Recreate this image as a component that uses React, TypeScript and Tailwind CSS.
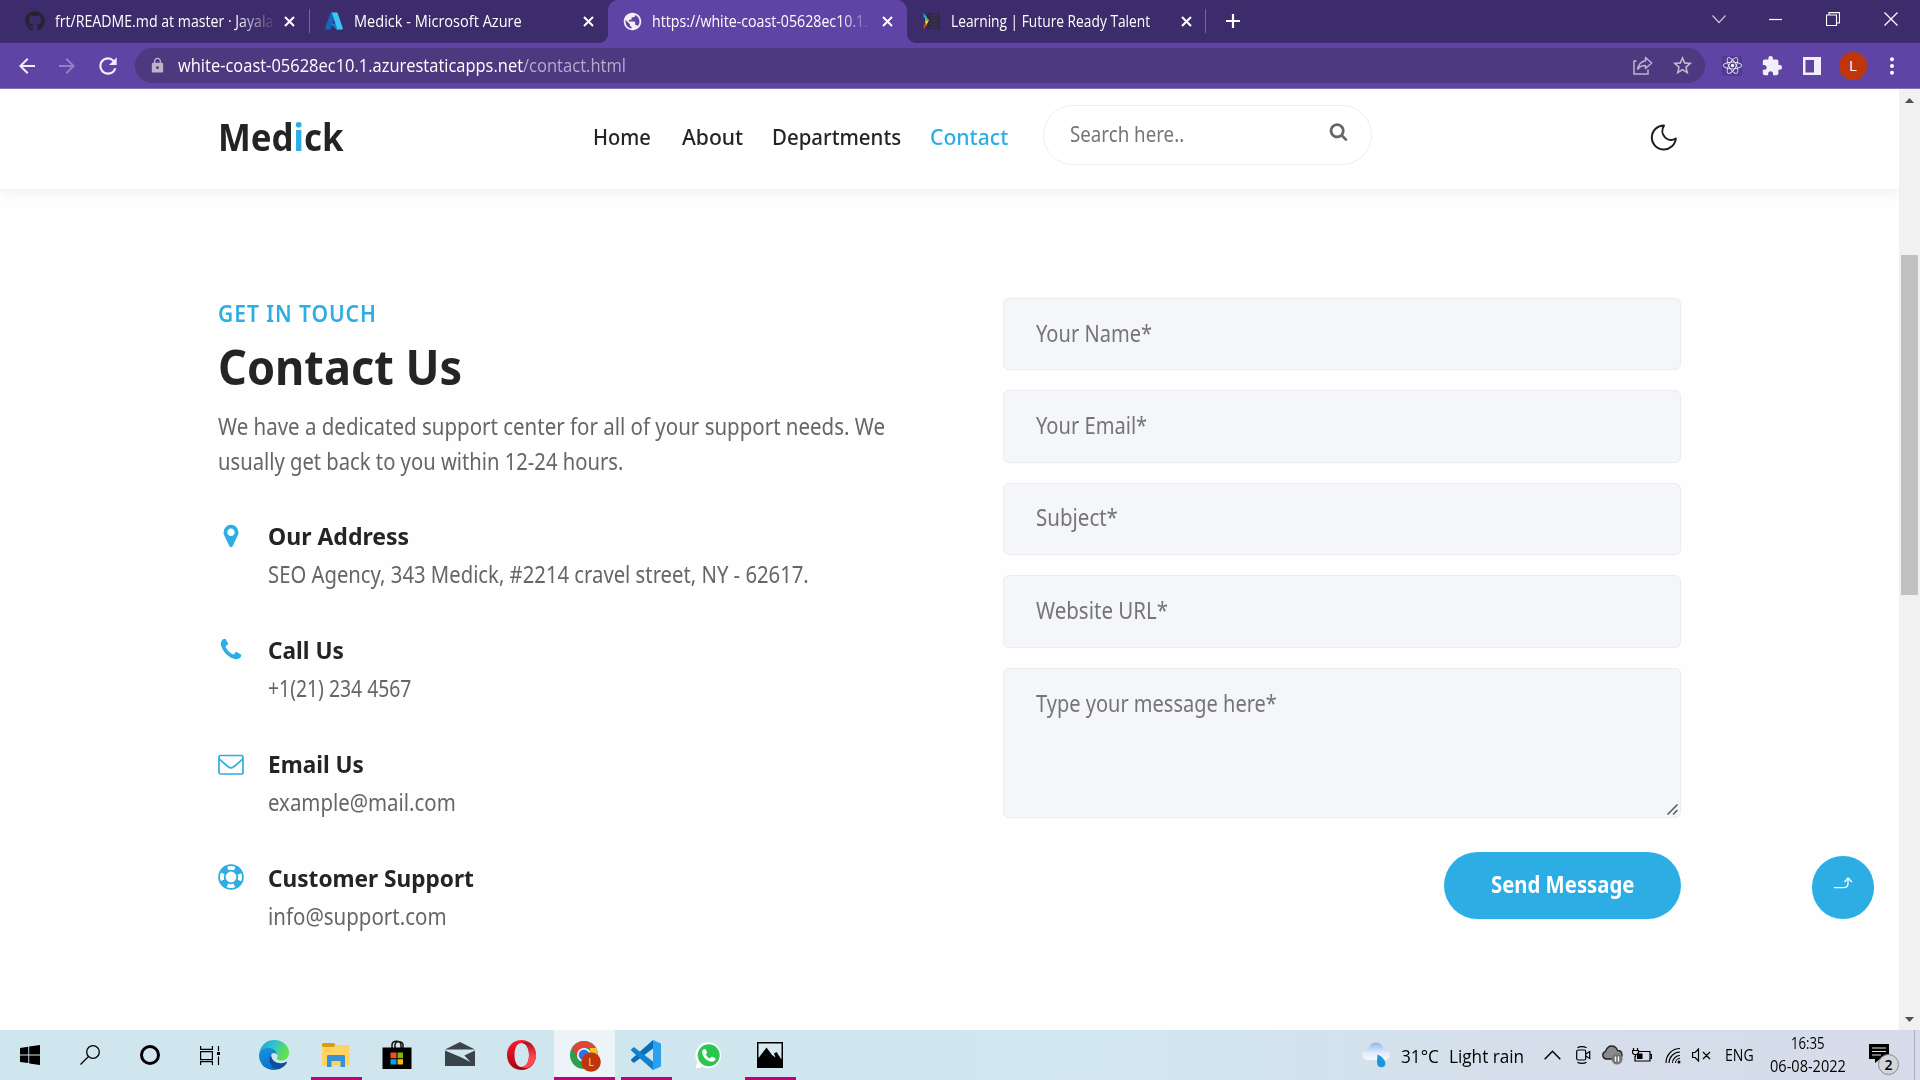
import React, { useLayoutEffect, useRef, useState } from 'react';
import { FaGithub, FaReact } from 'react-icons/fa';
import { MdExtension, MdStarBorder, MdRefresh, MdArrowBack, MdArrowForward, MdLock, MdPublic } from 'react-icons/md';

/** Single line of text condensed or widened horizontally to an exact width. */
function Fit({ w, className = '', children }: { w: number; className?: string; children: React.ReactNode }) {
  const ref = useRef<HTMLSpanElement>(null);
  const [scale, setScale] = useState(1);
  useLayoutEffect(() => {
    if (ref.current) setScale(w / ref.current.offsetWidth);
  }, [w]);
  return (
    <span className={`block shrink-0 whitespace-nowrap ${className}`} style={{ width: w }}>
      <span ref={ref} className="inline-block origin-left align-top" style={{ transform: `scaleX(${scale})` }}>
        {children}
      </span>
    </span>
  );
}

function CloseX() {
  return (
    <svg className="size-[11px] shrink-0" viewBox="0 0 11 11" stroke="#fff" strokeWidth="2" fill="none">
      <path d="M1 1l9 9M10 1l-9 9" />
    </svg>
  );
}

function AzureLogo() {
  return (
    <svg className="h-[18px] w-[18px] shrink-0" viewBox="0 0 18 18">
      <path d="M6.2.6h5.2L5.8 16.9c-.1.4-.5.6-.9.6H1c-.7 0-1.100-.6-.9-1.200L5.300 1.200c.1-.4.5-.6.9-.6z" fill="#1568b4" />
      <path d="M13.700 11.600H5.600l5.300 5.500c.3.300.6.400 1 .4h4z" fill="#0b7fd6" />
      <path d="M12.700 1.200c-.1-.4-.5-.6-.9-.6H6.100c.4 0 .8.200.9.600l5 15.100c.2.600-.2 1.200-.9 1.200h5.800c.7 0 1.100-.6.900-1.200z" fill="#3cc4f5" />
    </svg>
  );
}

function TabStrip() {
  return (
    <div className="flex h-[43px] items-center bg-[#3d2c6b] pb-[1px] text-[15.5px] leading-5 text-white">
      <div className="flex h-full w-[310px] shrink-0 items-center pl-[25px]">
        <FaGithub className="size-5 shrink-0 text-[#24242c]" />
        <div className="-mt-px ml-[10px] w-[221px] overflow-hidden [mask-image:linear-gradient(to_right,black_82%,transparent)]">
          <Fit w={218}>frt/README.md at master · Jayala</Fit>
        </div>
        <span className="ml-[8px]"><CloseX /></span>
        <span className="ml-auto h-6 w-px bg-[#7567a0]" />
      </div>
      <div className="flex h-full w-[298px] shrink-0 items-center pl-[15px]">
        <AzureLogo />
        <Fit w={168} className="-mt-px ml-[11px]">Medick - Microsoft Azure</Fit>
        <span className="ml-auto mr-[14px]"><CloseX /></span>
      </div>
      <div className="relative flex h-[43px] w-[299px] shrink-0 items-center self-start rounded-t-[10px] bg-[#5f44a5] pb-[1px] pl-[14px]">
        <span className="absolute -left-[10px] bottom-0 size-[10px] bg-[radial-gradient(circle_at_top_left,transparent_10px,#5f44a5_10.5px)]" />
        <span className="absolute -right-[10px] bottom-0 size-[10px] bg-[radial-gradient(circle_at_top_right,transparent_10px,#5f44a5_10.5px)]" />
        <MdPublic className="size-[21px] shrink-0 text-[#f1f0f6]" />
        <div className="-mt-px ml-[9px] w-[219px] overflow-hidden [mask-image:linear-gradient(to_right,black_86%,transparent)]">
          <Fit w={216}>https://white-coast-05628ec10.1.</Fit>
        </div>
        <span className="ml-auto mr-[14px]"><CloseX /></span>
      </div>
      <div className="flex h-full w-[299px] shrink-0 items-center pl-[16px]">
        <svg className="size-[18px] shrink-0" viewBox="0 0 18 18">
          <rect x="4" y="1" width="13" height="16" fill="#2e2845" />
          <path d="M7 3h8M7 6h8M7 9h8M7 12h8M7 15h8" stroke="#3d3654" />
          <path d="M.5 1L4 5v3L.5 5z" fill="#1c9ce5" />
          <path d="M2 4l4 4-4 2z" fill="#58c32d" />
          <path d="M2 9.500l4-1.500-3 6z" fill="#ffd21c" />
          <path d="M.5 13l3-1.500-2.500 6z" fill="#e8432a" />
        </svg>
        <Fit w={199} className="-mt-px ml-[10px]">Learning | Future Ready Talent</Fit>
        <span className="ml-auto mr-[13px]"><CloseX /></span>
        <span className="h-6 w-px bg-[#7567a0]" />
      </div>
      <svg className="ml-[20px] size-[14px] shrink-0" viewBox="0 0 14 14" stroke="#fff" strokeWidth="2.200"><path d="M7 0v14M0 7h14" /></svg>
      <div className="mb-[5px] ml-auto flex shrink-0 items-center">
        <svg className="mr-[43px] h-[14px] w-[14px]" viewBox="0 0 14 14" fill="none" stroke="#c8c2d8" strokeWidth="1.200"><path d="M.5 3.500l6.500 7 6.500-7" /></svg>
        <svg className="mr-[43px] h-[14px] w-[14px]" viewBox="0 0 14 14" stroke="#fff" strokeWidth="1.200"><path d="M0 7.500h13" /></svg>
        <svg className="mr-[44px] h-[14px] w-[14px]" viewBox="0 0 14 14" fill="none" stroke="#fff" strokeWidth="1.100"><path d="M.5 3h10v10.500H.5zM3 3V.600h10.500v10.400h-3" /></svg>
        <svg className="mr-[22px] h-[14px] w-[14px]" viewBox="0 0 14 14" stroke="#fff" strokeWidth="1.300"><path d="M.5 .5l13 13M13.500 .5l-13 13" /></svg>
      </div>
    </div>
  );
}

function Toolbar() {
  return (
    <div className="flex h-[46px] items-center border-b border-[#8671be] bg-[#5f44a5] text-[#f1eff7]">
      <MdArrowBack className="ml-[15px] size-6 shrink-0" />
      <MdArrowForward className="ml-[16px] size-6 shrink-0 text-[#9480c4]" />
      <MdRefresh className="ml-[16px] size-[26px] shrink-0" />
      <div className="ml-[14px] flex h-[35px] w-[1570px] shrink-0 items-center rounded-full bg-[#4c3980] pl-[14px] text-[18px] leading-6">
        <MdLock className="size-[17px] shrink-0 text-[#b9b5c6]" />
        <Fit w={345} className="-mt-px ml-[12px] text-white">white-coast-05628ec10.1.azurestaticapps.net</Fit>
        <Fit w={103} className="-mt-px text-[#b5abcd]">/contact.html</Fit>
        <svg className="ml-auto h-[19px] w-[20px] shrink-0" viewBox="0 0 20 19" fill="none" stroke="#bab4cc" strokeWidth="1.500">
          <path d="M3.500 5H1v13h14v-4.500" />
          <path d="M12.500 1.500l6.200 5.500-6.200 5.500V9.500c-3.500 0-6 1-7.800 3.800C5.300 8.800 7.800 5.500 12.500 4.700z" strokeLinejoin="round" />
        </svg>
        <MdStarBorder className="ml-[18px] mr-[11px] size-[23px] shrink-0 text-[#c2bdd0]" />
      </div>
      <div className="ml-[17px] flex size-5 shrink-0 items-center justify-center bg-[#503b90]"><FaReact className="size-[19px]" /></div>
      <MdExtension className="ml-[19px] size-[22px] shrink-0" />
      <svg className="ml-[20px] h-[18px] w-[18px] shrink-0" viewBox="0 0 18 18"><path fillRule="evenodd" d="M0 0h18v18H0zM2.500 3v12.500H11V3z" fill="#f1eff7" /></svg>
      <span className="ml-[18px] flex size-7 shrink-0 items-center justify-center rounded-full bg-[#bf360c] text-[15px] text-white">L</span>
      <svg className="ml-[23px] h-[18px] w-[4px] shrink-0" viewBox="0 0 4 18" fill="#fff"><circle cx="2" cy="2.200" r="2" /><circle cx="2" cy="9" r="2" /><circle cx="2" cy="15.800" r="2" /></svg>
    </div>
  );
}

function SiteHeader() {
  return (
    <header className="h-[100px] bg-white text-[#242423] shadow-[0_4px_12px_rgba(0,0,0,0.06)]">
      <div className="flex h-[95px] items-center pl-[218px]">
        <Fit w={126} className="text-[37px] font-bold leading-[50px]">Med<span className="text-[#2cade3]">i</span>ck</Fit>
        <nav className="mt-px ml-[249px] flex text-[22.5px] font-medium leading-[34px]">
          <Fit w={58} className="mr-[31px]">Home</Fit>
          <Fit w={61} className="mr-[29px]">About</Fit>
          <Fit w={129} className="mr-[29px]">Departments</Fit>
          <Fit w={78} className="text-[#2cade3]">Contact</Fit>
        </nav>
        <div className="mb-[4px] ml-[35px] flex h-[60px] w-[329px] shrink-0 items-center rounded-full border border-[#eeeeee] pb-[3px] pl-[26px] text-[22px] leading-[30px] text-[#757575]">
          <Fit w={114}>Search here..</Fit>
          <svg className="mb-1 ml-auto mr-[23px] size-[19px]" viewBox="0 0 1792 1792" fill="#666">
            <path d="M1216 832q0-185-131.500-316.500t-316.500-131.500-316.500 131.500-131.500 316.500 131.500 316.500 316.500 131.500 316.500-131.500 131.500-316.500zm512 832q0 52-38 90t-90 38q-54 0-90-38l-343-342q-179 124-399 124-143 0-273.500-55.500t-225-150-150-225-55.500-273.500 55.500-273.500 150-225 225-150 273.500-55.500 273.500 55.500 225 150 150 225 55.500 273.500q0 220-124 399l343 343q37 37 37 90z" />
          </svg>
        </div>
        <svg className="ml-[278px] mt-[2px] size-[27px] shrink-0" viewBox="0 0 27 27" fill="none" stroke="#1d1d1d" strokeWidth="2" strokeLinejoin="round">
          <path d="M14 1.500A12 12 0 1 0 25.800 14.500c-3.300 2.300-7.800 1.900-10.600-.9-3.300-3.200-3.700-8.100-1.200-12.100z" />
        </svg>
      </div>
    </header>
  );
}

function PinIcon() {
  return (
    <svg className="size-[26px]" viewBox="0 0 1792 1792" fill="#2cade3"><path d="M1152 640q0-106-75-181t-181-75-181 75-75 181 75 181 181 75 181-75 75-181zm256 0q0 109-33 179l-364 774q-16 33-47.500 52t-67.500 19-67.500-19-46.500-52l-365-774q-33-70-33-179 0-212 150-362t362-150 362 150 150 362z" /></svg>
  );
}

function PhoneIcon() {
  return (
    <svg className="size-[26px]" viewBox="0 0 1792 1792" fill="#2cade3"><path d="M1600 1240q0 27-10 70.500t-21 68.500q-21 50-122 106-94 51-186 51-27 0-53-3.500t-57.500-12.500-47-14.500-55.500-20.500-49-18q-98-35-175-83-127-79-264-216t-216-264q-48-77-83-175-3-9-18-49t-20.500-55.500-14.500-47-12.500-57.500-3.500-53q0-92 51-186 56-101 106-122 25-11 68.500-21t70.500-10q14 0 21 3 18 6 53 76 11 19 30 54t35 63.500 31 53.500q3 4 17.500 25t21.500 35.500 7 28.500q0 20-28.500 50t-62 55-62 53-28.500 46q0 9 5 22.500t8.500 20.500 14 24 11.500 19q76 137 174 235t235 174q2 1 19 11.500t24 14 20.500 8.500 22.500 5q18 0 46-28.500t53-62 55-62 50-28.500q14 0 28.500 7t35.500 21.500 25 17.500q25 15 53.500 31t63.500 35 54 30q70 35 76 53 3 7 3 21z" /></svg>
  );
}

function MailIcon() {
  return (
    <svg className="size-[26px]" viewBox="0 0 26 26" fill="none" stroke="#2cade3" strokeWidth="1.700">
      <rect x="1" y="4.500" width="24" height="18.500" rx="1.800" />
      <path d="M1.500 8c2.500 3 6 5.300 9 7.900 1.800 1.500 3.200 1.500 5 0 3-2.600 6.500-4.900 9-7.900" />
    </svg>
  );
}

function LifeRingIcon() {
  return (
    <svg className="-mt-px size-[26px]" viewBox="0 0 26 26" fill="none" stroke="#2cade3">
      <circle cx="13" cy="13" r="11.900" strokeWidth="1.800" />
      <circle cx="13" cy="13" r="6.300" strokeWidth="1.800" />
      <circle cx="13" cy="13" r="9" strokeWidth="6" strokeDasharray="7.100 7.037" strokeDashoffset="-3.550" />
    </svg>
  );
}

const contacts = [
  { icon: <PinIcon />, title: 'Our Address', tw: 141, text: 'SEO Agency, 343 Medick, #2214 cravel street, NY - 62617.', w: 541 },
  { icon: <PhoneIcon />, title: 'Call Us', tw: 76, text: '+1(21) 234 4567', w: 143 },
  { icon: <MailIcon />, title: 'Email Us', tw: 96, text: 'example@mail.com', w: 188 },
  { icon: <LifeRingIcon />, title: 'Customer Support', tw: 206, text: 'info@support.com', w: 179 },
];

const fields = [
  { label: 'Your Name*', w: 116 },
  { label: 'Your Email*', w: 111 },
  { label: 'Subject*', w: 82 },
  { label: 'Website URL*', w: 132 },
];

function ContactSection() {
  return (
    <section className="flex pl-[218px] pt-[109px] text-[23px] text-[#666666]">
      <div className="w-[785px] shrink-0">
        <Fit w={159} className="mt-px text-[22.5px] font-semibold leading-[30px] tracking-[1px] text-[#2cade3]">GET IN TOUCH</Fit>
        <h1 className="mt-[8px] text-[48px] font-bold leading-[60px] text-[#242423]"><Fit w={244}>Contact Us</Fit></h1>
        <div className="mt-[12px] leading-[35px]">
          <Fit w={667}>We have a dedicated support center for all of your support needs. We</Fit>
          <Fit w={405}>usually get back to you within 12-24 hours.</Fit>
        </div>
        <ul className="mt-[37px] flex flex-col gap-[38px] leading-[38px]">
          {contacts.map((c) => (
            <li key={c.title} className="flex h-[76px]">
              <span className="mr-[24px] mt-[7px] shrink-0">{c.icon}</span>
              <div className="pt-px">
                <Fit w={c.tw} className="text-[23.5px] font-bold text-[#242423]">{c.title}</Fit>
                <Fit w={c.w}>{c.text}</Fit>
              </div>
            </li>
          ))}
        </ul>
      </div>
      <form className="flex w-[678px] shrink-0 flex-col text-[#757575]">
        {fields.map((f) => (
          <div key={f.label} className="mb-5 flex h-[72.4px] items-center rounded-[6px] border border-[#ececee] bg-[#f4f6fa] pb-[2px] pl-8 leading-[35px]">
            <Fit w={f.w}>{f.label}</Fit>
          </div>
        ))}
        <div className="relative h-[150px] rounded-[6px] border border-[#ececee] bg-[#f4f6fa] pl-8 pt-[17px] leading-[35px]">
          <Fit w={241}>Type your message here*</Fit>
          <svg className="absolute bottom-[2px] right-[2px] size-[12px]" viewBox="0 0 12 12" stroke="#555" strokeWidth="1.500"><path d="M1.500 11.500l10-10M7 11.500l4.500-4.500" /></svg>
        </div>
        <div className="mt-[34px] flex h-[67px] w-[237px] justify-center self-end rounded-full bg-[#2cade3] pt-[15px] font-bold leading-[35px] text-white">
          <Fit w={143}>Send Message</Fit>
        </div>
      </form>
      <button className="ml-[131px] mt-[558px] flex h-[63px] w-[62px] shrink-0 justify-center rounded-full bg-[#2cade3] pt-[21px]">
        <svg className="h-[12px] w-[19px]" viewBox="0 0 19 12" fill="none" stroke="#fff" strokeWidth="1.300"><path d="M0 10.700h9.500c3 0 4.500-1.500 4.500-4.500V1.500M10.500 5L14 1l4 4" /></svg>
      </button>
    </section>
  );
}

function Scrollbar() {
  return (
    <div className="flex w-[21px] shrink-0 flex-col items-center bg-[#f1f1f1]">
      <svg className="mt-[9px] h-[5px] w-[9px]" viewBox="0 0 9 5"><path d="M4.500 0L9 5H0z" fill="#505050" /></svg>
      <div className="mt-[152px] h-[340px] w-[17px] bg-[#c1c1c1]" />
      <svg className="mb-[8px] mt-auto h-[5px] w-[9px]" viewBox="0 0 9 5"><path d="M4.500 5L9 0H0z" fill="#505050" /></svg>
    </div>
  );
}

function Slot({ w, bar, active, children }: { w: number; bar?: boolean; active?: boolean; children: React.ReactNode }) {
  return (
    <div
      className={`flex h-[50px] shrink-0 items-center justify-center border-b-[3px] pt-[3px] ${bar ? 'border-[#bf0077]' : 'border-transparent'} ${active ? 'bg-[#ecf4f8]' : ''}`}
      style={{ width: w }}
    >
      {children}
    </div>
  );
}

function EdgeLogo() {
  return (
    <svg className="size-[30px]" viewBox="0 0 30 30">
      <defs>
        <linearGradient id="edgeTop" x1="0" y1="0" x2="1" y2="0.4"><stop offset="0" stopColor="#2196d8" /><stop offset=".5" stopColor="#2fc3cf" /><stop offset="1" stopColor="#63e04b" /></linearGradient>
        <linearGradient id="edgeLeft" x1="0" y1="0" x2="0.5" y2="1"><stop offset="0" stopColor="#1a95dd" /><stop offset="1" stopColor="#0a6fcb" /></linearGradient>
      </defs>
      <path d="M0 15C1 6 7 0 15 0c9 0 15 6 15 12.500 0 5-3.500 8-7.500 8-3.500 0-5-1.300-4.500-2.500 1.300-2 1-6-3.500-6.500C9 10 3 11 0 15z" fill="url(#edgeTop)" />
      <path d="M0 15c1.500-5.500 6-7.500 10-7 5 .5 8 3.500 8 7-1-3-6-3-6 1.500 0 5 4 10 10 11.500-3 2-7 2.300-10 1.700C5 28.500 0 23 0 15z" fill="url(#edgeLeft)" />
      <path d="M12 15c-4 6 0 13.500 7 14 4-.5 7.500-3.500 9-6.500.3-.8-.3-1-1-.6-6 3-14 1-15-6.900z" fill="#0c509c" />
    </svg>
  );
}

function ChromeLogo() {
  return (
    <svg className="ml-px mt-[3px] h-[31px] w-[31px]" viewBox="0 0 31 31">
      <circle cx="14" cy="14" r="14" fill="#2f9e4f" />
      <path d="M1.900 7A14 14 0 0 1 26.100 7H14z" fill="#e04436" />
      <path d="M1.900 7L8 17.500 14 7z" fill="#e04436" />
      <path d="M26.100 7A14 14 0 0 1 14 28l6-10.500V7z" fill="#fbc02d" />
      <circle cx="14" cy="14" r="7" fill="#fff" />
      <circle cx="14" cy="14" r="5.400" fill="#2a74e8" />
      <circle cx="21" cy="21" r="9.800" fill="#bf360c" />
      <text x="21" y="25" textAnchor="middle" fontSize="11" fill="#e9d3cb" fontFamily="Open Sans, sans-serif">L</text>
    </svg>
  );
}

function WhatsAppLogo() {
  return (
    <svg className="h-[27px] w-[27px]" viewBox="0 0 27 27">
      <path d="M13.700.3A13 13 0 1 1 7.300 24.900L.3 26.800l2-6.800A13 13 0 0 1 13.700.3z" fill="#fff" />
      <circle cx="13.700" cy="13.200" r="11" fill="#2bc650" />
      <path d="M8.700 7.300c.5-.5 1.600-.6 2 .2l1.200 2.600c.2.500 0 .9-.3 1.300l-.8 1c.9 1.900 2.300 3.200 4.300 4l1.100-1.300c.3-.4.700-.5 1.200-.3l2.600 1.200c.6.300.7.700.5 1.300-.5 1.700-2 2.600-3.700 2.500-5-.6-9.200-4.700-9.700-9.300 0-1.400.7-2.500 1.600-3.200z" fill="#fff" />
    </svg>
  );
}

function Taskbar() {
  return (
    <footer className="flex h-[50px] items-center bg-[linear-gradient(to_right,#cfe6ef_0%,#d1e6ef_60%,#d5dfeb_78%,#d6dbe9_100%)] text-black">
      <Slot w={60}>
        <svg className="size-5" viewBox="0 0 20 20"><path d="M0 3l8.300-1.200v7.700H0zM9.200 1.600L20 0v9.500H9.200zM0 10.400h8.300v7.700L0 17zM9.200 10.400H20V20L9.200 18.400z" /></svg>
      </Slot>
      <Slot w={60}>
        <svg className="size-5" viewBox="0 0 20 20" fill="none" stroke="#000" strokeWidth="1.300"><circle cx="13" cy="7" r="6.300" /><path d="M8.500 11.500L.5 19.500" /></svg>
      </Slot>
      <Slot w={60}><span className="size-[20px] rounded-full border-[3px] border-black" /></Slot>
      <Slot w={60}>
        <svg className="h-[19px] w-[20px]" viewBox="0 0 20 19" fill="none" stroke="#000" strokeWidth="1.200"><path d="M.600 0v3.400h11.800V0M.600 19v-3.400h11.800V19M.600 5.600h11.800v8H.600zM18.500 0v5M18.500 10.500V19" /><path d="M17 6h3v3h-3z" fill="#000" stroke="none" /></svg>
      </Slot>
      <Slot w={68}><EdgeLogo /></Slot>
      <span className="w-[3px]" />
      <Slot w={51} bar>
        <svg className="-ml-[2px] -mt-px h-[24px] w-[28px]" viewBox="0 0 28 24">
          <path d="M0 4h12l2-2h13.500v20.500H0z" fill="#ffd35f" /><path d="M1 0h11l1.500 1.500L12 4H1L0 3V1z" fill="#dd9b0d" />
          <path d="M5 24V13.500c0-1 .5-1.500 1.500-1.500h15c1 0 1.500.5 1.500 1.500V24h-4.500v-6h-9v6z" fill="#3a92d6" />
        </svg>
      </Slot>
      <span className="w-[4px]" />
      <Slot w={62}>
        <svg className="h-[30px] w-[30px]" viewBox="0 0 30 30">
          <path d="M10 8V5c0-5 9-5 9 0v3M13 8V5c0-5 8-4 8 0v3" fill="none" stroke="#111" strokeWidth="1.500" />
          <path d="M.5 7.500h29V29H.5z" />
          <path d="M8.500 12.500h6v5.700h-6z" fill="#f25022" /><path d="M15.500 12.500h5.500v5.700h-5.500z" fill="#7fba00" /><path d="M8.500 19.200h6v5.300h-6z" fill="#00a4ef" /><path d="M15.500 19.200h5.500v5.300h-5.500z" fill="#ffb900" />
        </svg>
      </Slot>
      <Slot w={64}>
        <svg className="mb-[2px] h-[24px] w-[30px]" viewBox="0 0 30 24" fill="#394349"><path d="M0 7.500L15 0l15 7.500zM0 8.500L16.500 15.500 25.500 20 19.300 13.500 30 8.500V24H0z" /></svg>
      </Slot>
      <Slot w={60}>
        <svg className="-ml-[2px] h-[30px] w-[29px]" viewBox="0 0 29 30">
          <defs>
            <linearGradient id="opera" x1="0" y1="0" x2="0" y2="1"><stop offset="0" stopColor="#ff1b2d" /><stop offset="1" stopColor="#a70014" /></linearGradient>
            <linearGradient id="operaRight" x1="0" y1="0" x2="0" y2="1"><stop offset="0" stopColor="#a8101c" /><stop offset=".6" stopColor="#ff4b50" /></linearGradient>
          </defs>
          <path fillRule="evenodd" d="M14.500 0C23 0 29 6.500 29 15s-6 15-14.500 15S0 23.500 0 15 6 0 14.500 0zm0 3C10 3 7.500 8 7.500 15s2.500 12 7 12 7.500-5 7.500-12-3-12-7.500-12z" fill="url(#opera)" />
          <path d="M14.500 3c3-1.500 6-1.200 8.500.3 4 3 6 7 6 11.700s-2 9-6 11.700c-2.500 1.500-5.500 1.800-8.500.3 4.500 0 7.500-5 7.500-12s-3-12-7.500-12z" fill="url(#operaRight)" />
        </svg>
      </Slot>
      <span className="w-[2px]" />
      <Slot w={61} bar active><ChromeLogo /></Slot>
      <span className="w-[6px]" />
      <Slot w={51} bar>
        <svg className="-ml-px h-[30px] w-[30px]" viewBox="0 0 30 30">
          <path d="M22 0v8.500L3.500 22.500c-.5.400-1 .3-1.300 0L.3 20.700c-.4-.4-.4-1 0-1.400z" fill="#0a6db8" />
          <path d="M22 30v-8.500L3.500 7.500c-.5-.4-1-.3-1.300 0L.3 9.300c-.4.400-.4 1 0 1.400z" fill="#1382cd" />
          <path d="M22 0l7 3c.6.300 1 .8 1 1.500v21c0 .7-.4 1.200-1 1.500l-7 3z" fill="#2aa1ee" />
        </svg>
      </Slot>
      <Slot w={72}><WhatsAppLogo /></Slot>
      <span className="w-px" />
      <Slot w={51} bar>
        <svg className="-ml-[2px] h-[26px] w-[26px]" viewBox="0 0 26 26"><path d="M0 0h26v26H0z" /><path d="M1.500 1.500h23V17.500L19.500 10l-2.500 1.500 1.500 4L15 13 9.500 5.500 1.500 16z" fill="#d7e9f1" /></svg>
      </Slot>
      <svg className="ml-auto h-[27px] w-[28px] shrink-0" viewBox="0 0 28 27">
        <defs><linearGradient id="cloud" x1="0" y1="0" x2="0" y2="1"><stop offset="0" stopColor="#8fb6ec" /><stop offset=".6" stopColor="#e3edfa" /><stop offset="1" stopColor="#f8fafd" /></linearGradient></defs>
        <path d="M5.500 18a5.500 5.500 0 0 1 .5-11C7 3 10 .5 14 .5s6.500 2.500 7.500 6.500c4 0 6.500 2.500 6.500 5.500S25.500 18 22 18z" fill="url(#cloud)" />
        <path d="M15.500 12.500c4 1.500 8 5.500 8 9.500a4.300 4.300 0 0 1-8.300 0c-.5-3 .3-6 .3-9.500z" fill="#1b96dc" />
      </svg>
      <Fit w={38} className="ml-[11px] mt-px text-[19px] leading-6">31°C</Fit>
      <Fit w={75} className="ml-[10px] mt-px text-[19px] leading-6">Light rain</Fit>
      <svg className="ml-[20px] h-[10px] w-[17px] shrink-0" viewBox="0 0 17 10" fill="none" stroke="#000" strokeWidth="1.500"><path d="M.7 9.300l7.800-8 7.800 8" /></svg>
      <svg className="ml-[15px] h-[18px] w-[15px] shrink-0" viewBox="0 0 15 18" fill="none" stroke="#000" strokeWidth="1.200"><rect x=".7" y="4" width="9" height="10" rx="1.500" /><path d="M9.700 8l4-2.500v7L9.700 10M1.500 1.800c2-1.500 6.500-1.500 9 0M1.500 16.200c2 1.500 6.500 1.500 9 0" /></svg>
      <svg className="ml-[11px] h-[20px] w-[21px] shrink-0" viewBox="0 0 21 20">
        <path d="M4 14a4 4 0 0 1-.5-7.700C5 2.500 7 1 9.500 1c3 0 5 1.500 6 4.500 3 0 4.500 2 4.500 4.500 0 2.300-1.500 4-4 4z" fill="#8a8a8a" stroke="#222" strokeWidth="1.300" />
        <circle cx="15" cy="14" r="5.500" fill="#777" /><path d="M13.500 11.500v5M16.500 11.500v5" stroke="#fff" strokeWidth="1.300" />
      </svg>
      <svg className="ml-[9px] h-[15px] w-[20px] shrink-0" viewBox="0 0 20 15" fill="none" stroke="#000" strokeWidth="1.200"><path d="M6 3.500h12v9.500H3V8M18.500 6.500h1v4h-1M1.500 0v2.500M5.500 0v2.500M.5 2.500h6V5l-1.500 1.500H2L.5 5zM3.500 6.500V9" /><path d="M5 5.500h5.500v5.500H5z" fill="#000" stroke="none" /></svg>
      <svg className="ml-[13px] h-[17px] w-[16px] shrink-0" viewBox="0 0 16 17" fill="none" stroke="#000" strokeWidth="1.100"><path d="M1 16C1 8 7 1.500 15 1.500M4 16C4 10 9 5 15 5M7.500 16c0-4 3.500-7.500 7.500-7.500M10.500 16c0-2.500 2-4.500 4.500-4.500" /><circle cx="14" cy="15" r="1.500" fill="#000" stroke="none" /></svg>
      <svg className="ml-[11px] h-[14px] w-[19px] shrink-0" viewBox="0 0 19 14" fill="none" stroke="#000" strokeWidth="1.200"><path d="M.6 4.500h2.600L6.500 1v12L3.200 9.500H.6zM11 4l7 7M18 4l-7 7" /></svg>
      <Fit w={29} className="ml-[14px] text-[16px] leading-5">ENG</Fit>
      <div className="ml-[15px] flex w-[77px] shrink-0 flex-col items-center text-[15.5px] leading-[23px]">
        <Fit w={34}>16:35</Fit>
        <Fit w={76}>06-08-2022</Fit>
      </div>
      <div className="relative ml-[23px] h-[34px] w-[31px] shrink-0">
        <svg className="mt-[6px] h-[20px] w-[20px]" viewBox="0 0 20 20"><path d="M0 0h20v15h-9l-5 4v-4H0z" /><path d="M3 4h14M3 7.500h14M3 11h9" stroke="#dfe4ee" strokeWidth="1.200" /></svg>
        <span className="absolute -bottom-[3px] right-[1px] flex size-[21px] items-center justify-center rounded-full border border-[#888] bg-[#d3d5d8] text-[14px] font-semibold leading-none">2</span>
      </div>
      <span className="ml-[14px] mr-[5px] h-full w-px shrink-0 bg-[#a9afbc]" />
    </footer>
  );
}

export default function App() {
  return (
    <div className="flex h-[1080px] w-[1920px] flex-col overflow-hidden bg-white font-['Open_Sans',sans-serif]">
      <TabStrip />
      <Toolbar />
      <div className="flex h-[941px] shrink-0">
        <main className="w-[1899px] shrink-0 overflow-hidden bg-[#fefefe] font-['Noto_Sans',sans-serif]">
          <SiteHeader />
          <ContactSection />
        </main>
        <Scrollbar />
      </div>
      <Taskbar />
    </div>
  );
}
